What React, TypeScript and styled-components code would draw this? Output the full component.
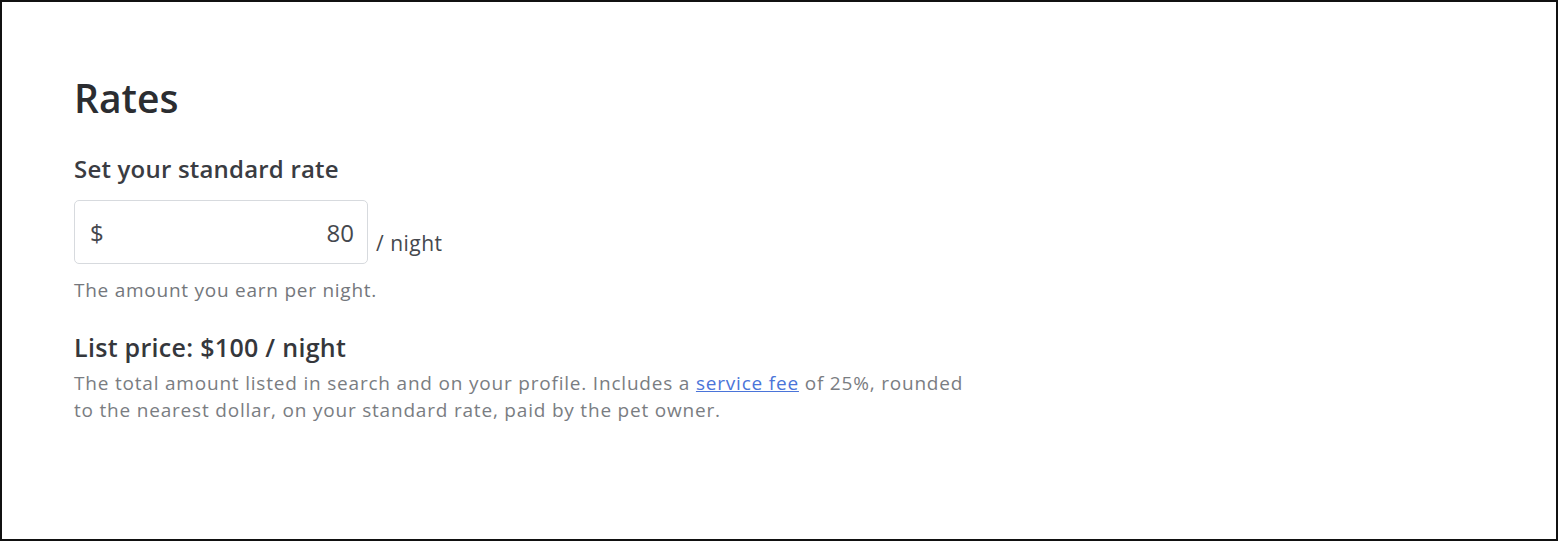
import styled, { createGlobalStyle } from "styled-components"

const Global = createGlobalStyle`
  html, body {
    margin: 0;
    padding: 0;
    background: #fff;
  }
  body {
    font-family: "Open Sans", Lato, sans-serif;
    color: #2e3036;
  }
`

const Frame = styled.div`
  box-sizing: border-box;
  width: 1558px;
  height: 541px;
  border: 2px solid #111;
  padding: 72px 72px 0;
`

const Title = styled.h1`
  margin: 0;
  font-size: 39px;
  font-weight: 600;
  line-height: 48px;
  color: #2b2d31;
`

const Label = styled.h2`
  margin: 32px 0 16px;
  font-size: 24px;
  font-weight: 600;
  line-height: 30px;
  letter-spacing: 0.2px;
  color: #3a3c42;
`

const RateRow = styled.div`
  display: flex;
  align-items: flex-end;
  gap: 8px;
`

const Input = styled.div`
  box-sizing: border-box;
  width: 294px;
  height: 64px;
  border: 1px solid #d7dade;
  border-radius: 5px;
  display: flex;
  align-items: center;
  justify-content: space-between;
  padding: 0 13px 0 15px;
  font-size: 24px;
  color: #45484e;
`

const Unit = styled.span`
  font-size: 21px;
  line-height: 21px;
  letter-spacing: 0.5px;
  margin-bottom: 10px;
  color: #45484e;
`

const Help = styled.p`
  margin: 14px 0 0;
  font-size: 19px;
  line-height: 24px;
  letter-spacing: 0.75px;
  color: #74777c;
`

const Price = styled.h3`
  margin: 30px 0 8px;
  font-size: 25px;
  font-weight: 600;
  line-height: 30px;
  letter-spacing: 0.3px;
  color: #35373c;
`

const Note = styled.p`
  margin: 0;
  max-width: 902px;
  font-size: 19px;
  line-height: 27px;
  letter-spacing: 0.8px;
  color: #7a7d82;
`

const Link = styled.a`
  color: #4a74d9;
  text-decoration: underline;
`

export default function App() {
  return (
    <>
      <Global />
      <Frame>
        <Title>Rates</Title>
        <Label>Set your standard rate</Label>
        <RateRow>
          <Input>
            <span>$</span>
            <span>80</span>
          </Input>
          <Unit>/ night</Unit>
        </RateRow>
        <Help>The amount you earn per night.</Help>
        <Price>List price: $100 / night</Price>
        <Note>
          The total amount listed in search and on your profile. Includes a{" "}
          <Link href="#">service fee</Link> of 25%, rounded to the nearest dollar,
          on your standard rate, paid by the pet owner.
        </Note>
      </Frame>
    </>
  )
}
